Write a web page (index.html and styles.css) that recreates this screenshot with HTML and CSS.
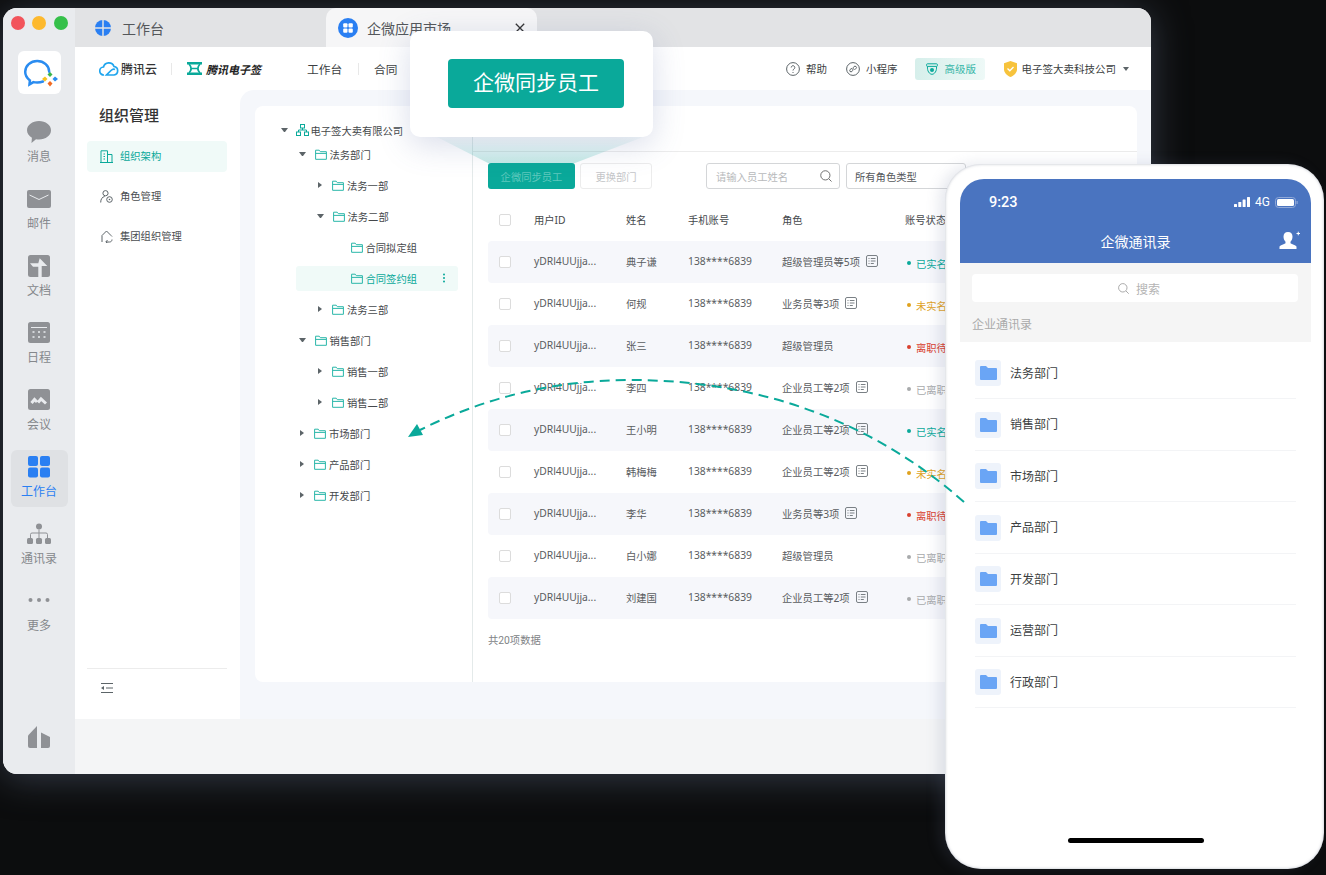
FILE: index.html
```html
<!DOCTYPE html>
<html lang="zh-CN">
<head>
  <meta charset="UTF-8">
  <title>企微同步员工</title>
  <link rel="stylesheet" href="styles.css">
</head>
<body>
  <svg width="0" height="0" class="defs">
    <symbol id="folder" viewBox="0 0 12 11"><path d="M.6 1.2h3.6l1.2 1.5h6v7.6H.6z M.6 4.4h10.8" fill="none" stroke="currentColor" stroke-width="1"/></symbol>
    <symbol id="doc" viewBox="0 0 12 12"><rect x=".5" y=".5" width="11" height="11" rx="1.5" fill="none" stroke="#7a8085"/><path d="M2.5 3.5h1M4.8 3.5h4.7M2.5 6h1M4.8 6h4.7M2.5 8.5h1M4.8 8.5h3" stroke="#7a8085"/></symbol>
    <symbol id="blue-folder" viewBox="0 0 17 14"><path d="M0 1a1 1 0 0 1 1-1h5l2 2h8a1 1 0 0 1 1 1v10a1 1 0 0 1-1 1H1a1 1 0 0 1-1-1z" fill="#6aa5f5"/></symbol>
  </svg>

  <div class="window">
    <!-- Left app rail -->
    <div class="rail">
      <div class="lights"><i class="red"></i><i class="yellow"></i><i class="green"></i></div>
      <div class="tile">
        <svg width="43" height="43" viewBox="0 0 43 43">
          <path d="M25 30.5c-1.800.7-3.800 1-5.800 1-1.300 0-2.600-.1-3.800-.4l-3.900 2.300.4-4C9 27.200 7.200 24.200 7.200 20.800 7.200 14.700 12.600 10 19.200 10s12 4.700 12 10.800" fill="none" stroke="#2a8cf0" stroke-width="2.500" stroke-linecap="round"/>
          <path d="M32 21l2.500 2.500-2.500 2.500-2.500-2.500z" fill="#3ab54a"/>
          <path d="M27 25.500l2.500 2.500-2.500 2.500-3-2.500z" fill="#f7c21e"/>
          <path d="M37 25.500l3 2.500-3 2.500-2.500-2.500z" fill="#2a8cf0"/>
          <path d="M32 30l2.500 2.500-2.500 3-2.500-3z" fill="#f26a21"/>
        </svg>
      </div>
      <div class="rail-nav">
        <div class="rail-item">
          <svg width="24" height="22" viewBox="0 0 24 22"><path d="M12 0c6.600 0 12 4 12 9.200s-5.400 9.300-12 9.300c-1 0-2-.1-3-.3L4.500 22l.4-5.300C2 15 0 12.300 0 9.200 0 4 5.400 0 12 0z" fill="#8f9195"/></svg>
          <span>消息</span>
        </div>
        <div class="rail-item">
          <svg width="24" height="22" viewBox="0 0 24 22"><rect y="2" width="24" height="18" rx="2" fill="#8f9195"/><path d="M2.500 7l9.500 4.500L21.500 7" fill="none" stroke="#e9ebee" stroke-width="1"/></svg>
          <span>邮件</span>
        </div>
        <div class="rail-item">
          <svg width="22" height="22" viewBox="0 0 22 22"><rect width="22" height="22" rx="2.500" fill="#8f9195"/><path d="M2 8.300h8.300l1.400-5L19.300 11h-5.600v11h-3.400V11.700H5z" fill="#e9ebee"/></svg>
          <span>文档</span>
        </div>
        <div class="rail-item">
          <svg width="22" height="22" viewBox="0 0 22 22"><rect width="22" height="21" rx="2.500" fill="#8f9195"/><path d="M3 5.500h16" stroke="#e9ebee"/><path d="M4.500 10h2M10 10h2M15.500 10h2M4.500 15h2M10 15h2M15.500 15h2" stroke="#e9ebee" stroke-width="1.500"/></svg>
          <span>日程</span>
        </div>
        <div class="rail-item">
          <svg width="22" height="22" viewBox="0 0 22 22"><rect width="22" height="21" rx="2.500" fill="#8f9195"/><path d="M3.500 14l3-3.500 2.500 2.500M10 13.500l3-3.500 5 4.500" fill="none" stroke="#e9ebee" stroke-width="3"/></svg>
          <span>会议</span>
        </div>
        <div class="rail-item active">
          <svg width="22" height="22" viewBox="0 0 22 22"><rect width="10" height="10" rx="2" fill="#2a7ff2"/><rect x="12" width="10" height="10" rx="2" fill="#2a7ff2"/><rect y="11.500" width="10" height="10" rx="2" fill="#2a7ff2"/><rect x="12" y="11.500" width="10" height="10" rx="2" fill="#2a7ff2"/></svg>
          <span>工作台</span>
        </div>
        <div class="rail-item">
          <svg width="24" height="22" viewBox="0 0 24 22"><circle cx="12" cy="3.500" r="3" fill="#8f9195"/><path d="M3.500 15v-3.500a1.500 1.500 0 0 1 1.500-1.500h14a1.500 1.500 0 0 1 1.500 1.500V15M12 6.500V15" fill="none" stroke="#8f9195"/><rect y="15" width="6" height="6" rx="1.500" fill="#8f9195"/><rect x="9" y="15" width="6" height="6" rx="1.500" fill="#8f9195"/><rect x="18" y="15" width="6" height="6" rx="1.500" fill="#8f9195"/></svg>
          <span>通讯录</span>
        </div>
        <div class="rail-item">
          <svg width="22" height="22" viewBox="0 0 22 22"><circle cx="2.500" cy="10" r="2" fill="#8f9195"/><circle cx="11" cy="10" r="2" fill="#8f9195"/><circle cx="19.500" cy="10" r="2" fill="#8f9195"/></svg>
          <span>更多</span>
        </div>
      </div>
      <svg class="rail-foot" width="22" height="22" viewBox="0 0 22 22"><path d="M0 9.500L9 0v22H2a2 2 0 0 1-2-2z" fill="#8f9195"/><path d="M13 6.500l9 4.500v9a2 2 0 0 1-2 2h-7z" fill="#8f9195"/></svg>
    </div>

    <div class="main">
      <!-- Tabs -->
      <div class="tabs">
        <div class="tab">
          <svg width="16" height="16" viewBox="0 0 16 16"><circle cx="8" cy="8" r="8" fill="#2a7ff2"/><path d="M8 0v16M0 8h16" stroke="#e2e3e5" stroke-width="1.500"/></svg>
          <span>工作台</span>
        </div>
        <div class="tab current">
          <svg width="20" height="20" viewBox="0 0 20 20"><circle cx="10" cy="10" r="10" fill="#2a7ff2"/><rect x="5.200" y="5.200" width="4.300" height="4.300" rx="1" fill="#fff"/><rect x="10.500" y="5.200" width="4.300" height="4.300" rx="1" fill="#fff"/><rect x="5.200" y="10.500" width="4.300" height="4.300" rx="1" fill="#fff"/><rect x="10.500" y="10.500" width="4.300" height="4.300" rx="1" fill="#fff"/></svg>
          <span>企微应用市场</span>
          <svg class="tab-close" width="10" height="10" viewBox="0 0 10 10"><path d="M.8.800l8.400 8.400M9.200.800L.8 9.200" stroke="#333" stroke-width="1.300"/></svg>
        </div>
      </div>

      <!-- Header -->
      <div class="header">
        <svg width="20" height="14" viewBox="0 0 20 14"><path d="M5 13a4 4 0 0 1-.5-8A5.500 5.500 0 0 1 15 4.500a4.300 4.300 0 0 1 0 8.500H7.500L12 8.500c1.500-1.500 3-1.700 4-1" fill="none" stroke="#1fa5ee" stroke-width="1.700"/></svg>
        <span class="brand">腾讯云</span>
        <i class="head-sep first"></i>
        <svg width="15" height="13" viewBox="0 0 15 13"><path d="M0 1.200h15M0 11.800h15" stroke="#0aa99a" stroke-width="2.400"/><path d="M2 2c2.800 3 2.800 6 0 9M13 2c-2.800 3-2.800 6 0 9M4 6.500h7" fill="none" stroke="#0aa99a" stroke-width="1.700"/></svg>
        <span class="brand-sign">腾讯电子签</span>
        <a class="head-link">工作台</a>
        <i class="head-sep"></i>
        <a class="head-link">合同</a>
        <div class="head-right">
          <svg width="14" height="14" viewBox="0 0 14 14"><circle cx="7" cy="7" r="6.400" fill="none" stroke="#5c6468"/><path d="M5.200 5.500a1.800 1.800 0 1 1 2.800 1.500c-.7.500-1 .8-1 1.500M7 10v1" fill="none" stroke="#5c6468"/></svg>
          <span class="head-text help">帮助</span>
          <svg width="14" height="14" viewBox="0 0 14 14"><circle cx="7" cy="7" r="6.400" fill="none" stroke="#5c6468"/><path d="M4 9.500c1.500 1 3-.5 3-2.500s1.500-3.500 3-2.500-.5 3-1.800 3M6 6.500C4.800 6.500 3 8 4 9.500" fill="none" stroke="#5c6468"/></svg>
          <span class="head-text mini">小程序</span>
          <div class="chip">
            <svg width="12" height="12" viewBox="0 0 12 12"><rect x=".6" y=".8" width="10.800" height="2.600" rx=".8" fill="none" stroke="#0aa99a"/><path d="M1.500 3.500c-.5 4.500 2 7.800 4.500 7.800s5-3.300 4.500-7.800" fill="none" stroke="#0aa99a"/><circle cx="6" cy="7" r="2" fill="#0aa99a"/></svg>
            <span>高级版</span>
          </div>
          <svg width="13" height="16" viewBox="0 0 13 16"><path d="M6.500 0L13 2.200v6c0 3.500-3 6.300-6.500 7.800C3 14.500 0 11.700 0 8.200v-6z" fill="#f7c33c"/><path d="M3.500 7.500l2.300 2.300 3.700-3.800" fill="none" stroke="#fff" stroke-width="1.300"/></svg>
          <span class="head-text company">电子签大卖科技公司</span>
          <i class="caret down"></i>
        </div>
      </div>

      <div class="body">
        <!-- Second level nav -->
        <div class="panel">
          <div class="panel-title">组织管理</div>
          <div class="panel-item selected">
            <svg width="13" height="13" viewBox="0 0 13 13"><path d="M1 12.500V.8h6.500v11.700M7.500 4.500h4.500v8M0 12.500h13M3.500 4h1.500M3.500 6.500h1.500M3.500 9h1.500" fill="none" stroke="#0aa99a"/></svg>
            <span>组织架构</span>
          </div>
          <div class="panel-item">
            <svg width="13" height="13" viewBox="0 0 13 13"><circle cx="5.500" cy="3.200" r="2.600" fill="none" stroke="#5c6468"/><path d="M.7 12.500c0-3.500 1.500-5.500 4-6" fill="none" stroke="#5c6468"/><circle cx="9.500" cy="9.500" r="2.800" fill="none" stroke="#5c6468"/><circle cx="9.500" cy="9.500" r=".8" fill="#5c6468"/></svg>
            <span>角色管理</span>
          </div>
          <div class="panel-item">
            <svg width="13" height="13" viewBox="0 0 13 13"><path d="M2 12V5.500L6.500 1 11 5.500l1 1M12 9.500c0 1.500-1 2.500-2.500 2.500H6M7.500 10l-1.700 2 1.700 1" fill="none" stroke="#5c6468"/></svg>
            <span>集团组织管理</span>
          </div>
          <div class="panel-foot">
            <svg width="12" height="10" viewBox="0 0 12 10"><path d="M0 .5h12M5 5h7M0 9.500h12" stroke="#5c6468"/><path d="M0 5l3-2v4z" fill="#5c6468"/></svg>
          </div>
        </div>

        <div class="content">
          <div class="card">
            <!-- Department tree -->
            <div class="tree">
              <div class="node root"><i class="caret down"></i>
                <svg class="org" width="13" height="12" viewBox="0 0 13 12"><rect x="4.500" y=".5" width="4" height="3.500" fill="none" stroke="#0aa99a"/><rect x=".5" y="8" width="4" height="3.500" fill="none" stroke="#0aa99a"/><rect x="8.500" y="8" width="4" height="3.500" fill="none" stroke="#0aa99a"/><path d="M6.500 4v2M2.500 8V6h8v2" fill="none" stroke="#0aa99a"/></svg>
                <span>电子签大卖有限公司</span></div>
              <div class="node lv1"><i class="caret down"></i><svg class="fold"><use href="#folder"/></svg><span>法务部门</span></div>
              <div class="node lv2"><i class="caret right"></i><svg class="fold"><use href="#folder"/></svg><span>法务一部</span></div>
              <div class="node lv2"><i class="caret down"></i><svg class="fold"><use href="#folder"/></svg><span>法务二部</span></div>
              <div class="node lv3"><i class="caret none"></i><svg class="fold"><use href="#folder"/></svg><span>合同拟定组</span></div>
              <div class="node lv3 picked"><i class="caret none"></i><svg class="fold"><use href="#folder"/></svg><span>合同签约组</span><b class="more-dots"></b></div>
              <div class="node lv2"><i class="caret right"></i><svg class="fold"><use href="#folder"/></svg><span>法务三部</span></div>
              <div class="node lv1"><i class="caret down"></i><svg class="fold"><use href="#folder"/></svg><span>销售部门</span></div>
              <div class="node lv2"><i class="caret right"></i><svg class="fold"><use href="#folder"/></svg><span>销售一部</span></div>
              <div class="node lv2"><i class="caret right"></i><svg class="fold"><use href="#folder"/></svg><span>销售二部</span></div>
              <div class="node lv1"><i class="caret right"></i><svg class="fold"><use href="#folder"/></svg><span>市场部门</span></div>
              <div class="node lv1"><i class="caret right"></i><svg class="fold"><use href="#folder"/></svg><span>产品部门</span></div>
              <div class="node lv1"><i class="caret right"></i><svg class="fold"><use href="#folder"/></svg><span>开发部门</span></div>
            </div>

            <div class="staff">
              <div class="staff-top"></div>
              <div class="toolbar">
                <button class="btn primary">企微同步员工</button>
                <button class="btn ghost">更换部门</button>
                <div class="search-box">
                  <span>请输入员工姓名</span>
                  <svg width="12" height="12" viewBox="0 0 13 13"><circle cx="5.800" cy="5.800" r="5" fill="none" stroke="#666"/><path d="M9.500 9.500l3 3" stroke="#666"/></svg>
                </div>
                <div class="select-box">所有角色类型</div>
              </div>

              <div class="table">
                <div class="row head"><i class="check"></i><span>用户ID</span><span>姓名</span><span>手机账号</span><span>角色</span><span>账号状态</span></div>
                <div class="row"><i class="check"></i><span>yDRl4UUjja...</span><span>典子谦</span><span>138****6839</span><span class="role">超级管理员等5项<svg><use href="#doc"/></svg></span><span class="state ok">已实名</span></div>
                <div class="row"><i class="check"></i><span>yDRl4UUjja...</span><span>何规</span><span>138****6839</span><span class="role">业务员等3项<svg><use href="#doc"/></svg></span><span class="state warn">未实名</span></div>
                <div class="row"><i class="check"></i><span>yDRl4UUjja...</span><span>张三</span><span>138****6839</span><span class="role">超级管理员</span><span class="state bad">离职待交接</span></div>
                <div class="row"><i class="check"></i><span>yDRl4UUjja...</span><span>李四</span><span>138****6839</span><span class="role">企业员工等2项<svg><use href="#doc"/></svg></span><span class="state off">已离职</span></div>
                <div class="row"><i class="check"></i><span>yDRl4UUjja...</span><span>王小明</span><span>138****6839</span><span class="role">企业员工等2项<svg><use href="#doc"/></svg></span><span class="state ok">已实名</span></div>
                <div class="row"><i class="check"></i><span>yDRl4UUjja...</span><span>韩梅梅</span><span>138****6839</span><span class="role">企业员工等2项<svg><use href="#doc"/></svg></span><span class="state warn">未实名</span></div>
                <div class="row"><i class="check"></i><span>yDRl4UUjja...</span><span>李华</span><span>138****6839</span><span class="role">业务员等3项<svg><use href="#doc"/></svg></span><span class="state bad">离职待交接</span></div>
                <div class="row"><i class="check"></i><span>yDRl4UUjja...</span><span>白小娜</span><span>138****6839</span><span class="role">超级管理员</span><span class="state off">已离职</span></div>
                <div class="row"><i class="check"></i><span>yDRl4UUjja...</span><span>刘建国</span><span>138****6839</span><span class="role">企业员工等2项<svg><use href="#doc"/></svg></span><span class="state off">已离职</span></div>
              </div>
              <div class="total">共20项数据</div>
            </div>
          </div>
        </div>
      </div>
      <div class="strip"></div>
    </div>
  </div>

  <!-- Callout over the sync button -->
  <svg class="beam" width="260" height="30" viewBox="0 0 260 30">
    <defs><linearGradient id="beamFill" x1="0" y1="0" x2="0" y2="1"><stop offset="0" stop-color="#0aa99a" stop-opacity=".02"/><stop offset="1" stop-color="#0aa99a" stop-opacity=".24"/></linearGradient></defs>
    <path d="M27 0H233L165 26H78z" fill="url(#beamFill)"/>
  </svg>
  <div class="callout"><div class="callout-btn">企微同步员工</div></div>

  <!-- Phone -->
  <div class="phone">
    <div class="screen">
      <div class="phone-head">
        <div class="status-bar">
          <span class="clock">9:23</span>
          <svg width="16" height="10" viewBox="0 0 16 10"><rect y="7" width="3" height="3" rx=".5" fill="#fff"/><rect x="4.300" y="5" width="3" height="5" rx=".5" fill="#fff"/><rect x="8.600" y="2.500" width="3" height="7.500" rx=".5" fill="#fff"/><rect x="13" width="3" height="10" rx=".5" fill="#fff"/></svg>
          <span class="net">4G</span>
          <svg width="23" height="11" viewBox="0 0 23 11"><rect x=".5" y=".5" width="20" height="10" rx="3" fill="none" stroke="#8fa8d8"/><rect x="2" y="2" width="17" height="7" rx="1.500" fill="#fff"/><rect x="21.500" y="4" width="1.200" height="3" fill="#8fa8d8"/></svg>
        </div>
        <div class="phone-title">企微通讯录
          <svg class="add-user" width="21" height="19" viewBox="0 0 21 19"><path d="M9 1c3 0 4.500 2 4.500 4.800 0 2.200-1 4-2 5v1.500c1.500.8 5 1.800 6 3.200v2.500H.5v-2.500c1-1.400 4.500-2.400 6-3.200v-1.500c-1-1-2-2.800-2-5C4.500 3 6 1 9 1z" fill="#fff"/><path d="M17.500 2.500h3.500M19.250.7v3.600" stroke="#fff"/></svg>
        </div>
      </div>
      <div class="phone-search">
        <div class="phone-input">
          <svg width="11" height="11" viewBox="0 0 11 11"><circle cx="4.800" cy="4.800" r="4.200" fill="none" stroke="#aaa"/><path d="M8 8l2.700 2.700" stroke="#aaa"/></svg>
          <span>搜索</span>
        </div>
        <div class="phone-label">企业通讯录</div>
      </div>
      <div class="dept-list">
        <div class="dept"><div class="dept-icon"><svg><use href="#blue-folder"/></svg></div><span>法务部门</span></div>
        <div class="dept"><div class="dept-icon"><svg><use href="#blue-folder"/></svg></div><span>销售部门</span></div>
        <div class="dept"><div class="dept-icon"><svg><use href="#blue-folder"/></svg></div><span>市场部门</span></div>
        <div class="dept"><div class="dept-icon"><svg><use href="#blue-folder"/></svg></div><span>产品部门</span></div>
        <div class="dept"><div class="dept-icon"><svg><use href="#blue-folder"/></svg></div><span>开发部门</span></div>
        <div class="dept"><div class="dept-icon"><svg><use href="#blue-folder"/></svg></div><span>运营部门</span></div>
        <div class="dept"><div class="dept-icon"><svg><use href="#blue-folder"/></svg></div><span>行政部门</span></div>
      </div>
      <div class="home-bar"></div>
    </div>
  </div>

  <!-- Dashed sync arrow, runs from the phone back to the tree -->
  <svg class="sync-arrow" width="1326" height="875" viewBox="0 0 1326 875">
    <path d="M964 502C860 410 740 380 630 380C550 380 480 400 420 430" fill="none" stroke="#0aa99a" stroke-width="2" stroke-dasharray="10 6"/>
    <path d="M408 437L417 424L423 435z" fill="#0aa99a"/>
  </svg>
</body>
</html>
```
FILE: styles.css
```css
/* Base */
html, body {
  margin: 0;
  padding: 0;
  height: 875px;
  overflow: hidden;
}

body {
  position: relative;
  background-color: #0c0d0e;
  font-family: Roboto, "Noto Sans CJK SC", sans-serif;
  font-size: 10.5px;
  color: #4a4d50;
}

i, b {
  font-style: normal;
  display: block;
}

.defs {
  position: absolute;
}

/* Desktop window */
.window {
  display: flex;
  width: 1148px;
  height: 766px;
  margin: 8px 0 0 3px;
  border-radius: 14px;
  overflow: hidden;
  background-color: #fff;
  box-shadow: 0 4px 36px rgba(80, 90, 110, 0.6);
}

/* App rail */
.rail {
  display: flex;
  flex-direction: column;
  align-items: center;
  width: 72px;
  flex-shrink: 0;
  padding-top: 8px;
  background-color: #e9ebee;
}

.lights {
  display: flex;
  gap: 7.5px;
}

.lights i {
  width: 14px;
  height: 14px;
  border-radius: 50%;
}

.red { background-color: #f2545b; }
.yellow { background-color: #fdb92e; }
.green { background-color: #35c04a; }

.tile {
  width: 43px;
  height: 43px;
  margin-top: 21px;
  border-radius: 6px;
  background-color: #fff;
}

.rail-nav {
  display: flex;
  flex-direction: column;
  gap: 10px;
  margin-top: 21px;
}

.rail-item {
  display: flex;
  flex-direction: column;
  align-items: center;
  gap: 6px;
  width: 57px;
  height: 57px;
  box-sizing: border-box;
  padding-top: 6px;
  border-radius: 6px;
  font-size: 12px;
  line-height: 17px;
  color: #85888c;
}

.rail-item.active {
  background-color: #dfe1e4;
  color: #2a7ff2;
}

.rail-foot {
  margin-top: auto;
  margin-bottom: 26px;
}

/* Main column */
.main {
  display: flex;
  flex-direction: column;
  flex: 1;
  min-width: 0;
}

.tabs {
  display: flex;
  height: 39px;
  flex-shrink: 0;
  background-color: #e2e3e5;
}

.tab {
  display: flex;
  align-items: center;
  gap: 11px;
  width: 251px;
  box-sizing: border-box;
  padding-left: 20px;
  font-size: 14px;
  color: #54575a;
  background-color: #e2e3e5;
}

.tab:first-child {
  border-bottom-right-radius: 8px;
}

.tab.current {
  width: 211px;
  gap: 9px;
  padding-left: 12px;
  border-radius: 10px 10px 0 0;
  background-color: #f6f6f7;
}

.tab-close {
  margin-left: auto;
  margin-right: 12px;
}

/* Header */
.header {
  display: flex;
  align-items: center;
  height: 43px;
  flex-shrink: 0;
  padding: 0 22px 0 24px;
  box-sizing: border-box;
  background-color: #fff;
}

.brand {
  margin-left: 2px;
  font-size: 12px;
  font-weight: 500;
  color: #333;
}

.head-sep {
  width: 1px;
  height: 12px;
  margin: 0 15px 0 16px;
  background-color: #e8e8e8;
}

.head-sep.first {
  margin: 0 15px 0 14px;
}

.brand-sign {
  margin-left: 4px;
  margin-right: 46px;
  font-size: 11px;
  font-weight: 700;
  font-style: italic;
  color: #222;
}

.head-link {
  font-size: 11.7px;
  color: #3c3f42;
}

.head-right {
  display: flex;
  align-items: center;
  margin-left: auto;
}

.head-text {
  margin-left: 6px;
  font-size: 10.5px;
  color: #3c3f42;
}

.help { margin-right: 19px; }
.mini { margin-right: 17px; }
.company { margin-left: 5px; margin-right: 7px; }

.chip {
  display: flex;
  align-items: center;
  gap: 7px;
  width: 70px;
  height: 22px;
  box-sizing: border-box;
  padding-left: 11px;
  margin-right: 19px;
  border-radius: 3px;
  font-size: 10.5px;
  color: #38b6a8;
  background: linear-gradient(90deg, #d6efeb, #eef9f7);
}

/* Tree carets */
.caret {
  width: 0;
  height: 0;
  flex-shrink: 0;
}

.caret.down {
  border-left: 3.5px solid transparent;
  border-right: 3.5px solid transparent;
  border-top: 4.5px solid #5c6468;
}

.caret.right {
  border-top: 3.5px solid transparent;
  border-bottom: 3.5px solid transparent;
  border-left: 4.5px solid #5c6468;
}

/* Body */
.body {
  display: flex;
  flex: 1;
  min-height: 0;
  background-color: #fff;
}

.panel {
  display: flex;
  flex-direction: column;
  width: 165px;
  flex-shrink: 0;
  box-sizing: border-box;
  padding: 0 13px 0 12px;
}

.panel-title {
  padding: 16px 0 14px 12px;
  font-size: 15px;
  line-height: 21px;
  font-weight: 500;
  color: #333;
}

.panel-item {
  display: flex;
  align-items: center;
  gap: 7px;
  height: 31px;
  margin-bottom: 9px;
  padding-left: 13px;
  border-radius: 4px;
  font-size: 10.3px;
  color: #4a4d50;
}

.panel-item span {
  margin-bottom: 2px;
}

.panel-item.selected {
  color: #0aa99a;
  background-color: #f0faf8;
}

.panel-foot {
  display: flex;
  align-items: center;
  height: 38px;
  margin-top: auto;
  margin-bottom: 12px;
  padding-left: 14px;
  border-top: 1px solid #ececec;
}

.content {
  flex: 1;
  min-width: 0;
  padding: 16px 14px 37px 15px;
  border-top-left-radius: 14px;
  background-color: #f5f7fb;
}

.card {
  display: flex;
  height: 100%;
  border-radius: 8px;
  overflow: hidden;
  background-color: #fff;
}

/* Department tree */
.tree {
  width: 218px;
  flex-shrink: 0;
  box-sizing: border-box;
  padding: 8.5px 14px 0 24px;
  border-right: 1px solid #e4eaea;
}

.node {
  display: flex;
  align-items: center;
  height: 31px;
  font-size: 10.3px;
  color: #45484b;
}

.node .caret {
  margin-left: 1.5px;
  margin-right: 9px;
  width: 7px;
  box-sizing: border-box;
}

.node .caret.right {
  width: 4.5px;
  margin-left: 2.5px;
  margin-right: 10px;
}

.node .caret.none {
  border: 0;
}

.root {
  margin-bottom: -7px;
}

.root .caret {
  margin-right: 8px;
}

.org {
  margin-right: 2px;
}

.fold {
  width: 12px;
  height: 11px;
  margin-right: 3px;
  color: #2ab7a9;
}

.lv1 { padding-left: 18px; }
.lv2 { padding-left: 36px; }
.lv3 { padding-left: 54px; }

.picked {
  height: 25px;
  margin: 3px 0 3px 17px;
  padding-left: 37px;
  padding-right: 13px;
  border-radius: 3px;
  color: #0aa99a;
  background-color: #f0faf8;
}

.more-dots {
  width: 2px;
  height: 2px;
  margin-left: auto;
  border-radius: 50%;
  background-color: #0aa99a;
  box-shadow: 0 -3.5px 0 #0aa99a, 0 3.5px 0 #0aa99a;
}

/* Staff table */
.staff {
  flex: 1;
  min-width: 0;
  overflow: hidden;
}

.staff-top {
  height: 45px;
  border-bottom: 1px solid #ececec;
}

.toolbar {
  display: flex;
  align-items: center;
  height: 26px;
  margin-top: 11px;
  padding-left: 15px;
}

.btn {
  height: 26px;
  padding: 0;
  border-radius: 3px;
  font: inherit;
  font-size: 10.3px;
}

.btn.primary {
  width: 87px;
  border: 0;
  color: #5fc8bd;
  background-color: #0aa99a;
}

.btn.ghost {
  width: 72px;
  margin-left: 5px;
  border: 1px solid #ececec;
  color: #c4c6c8;
  background-color: #fff;
}

.search-box, .select-box {
  display: flex;
  align-items: center;
  height: 26px;
  box-sizing: border-box;
  border: 1px solid #d4d6d8;
  border-radius: 3px;
  font-size: 10.3px;
}

.search-box {
  justify-content: space-between;
  width: 134px;
  margin-left: 54px;
  padding: 0 7px 0 9px;
  color: #b8babc;
}

.select-box {
  flex-shrink: 0;
  width: 120px;
  margin-left: 6px;
  padding-left: 8px;
  color: #55585b;
}

.table {
  margin-top: 10px;
  margin-left: 15px;
  width: 649px;
}

.row {
  display: grid;
  grid-template-columns: 46px 92px 62px 94px 123px 1fr;
  align-items: center;
  height: 42px;
  border-radius: 4px;
  white-space: nowrap;
  font-family: "Noto Sans", "Noto Sans CJK SC", sans-serif;
  font-size: 10.3px;
  color: #595c5f;
}

.row > span {
  margin-bottom: 2px;
}

.row.head {
  color: #45484b;
}

.row:nth-child(even) {
  background-color: #f6f7fb;
}

.check {
  width: 12px;
  height: 12px;
  margin-left: 11px;
  border: 1px solid #dcdcdc;
  border-radius: 2px;
  box-sizing: border-box;
  background-color: #fff;
}

.role {
  display: flex;
  align-items: center;
  gap: 6px;
}

.role svg {
  width: 12px;
  height: 12px;
}

.row > .state {
  display: flex;
  align-items: center;
  gap: 5px;
  margin: 2px 0 0 2px;
}

.state::before {
  content: "";
  width: 4px;
  height: 4px;
  border-radius: 50%;
  background-color: currentColor;
}

.ok { color: #0aa99a; }
.warn { color: #e0a21e; }
.bad { color: #d9402f; }
.off { color: #a8aaac; }

.total {
  margin: 15px 0 0 15px;
  font-size: 10.3px;
  line-height: 14px;
  color: #808386;
}

.strip {
  height: 55px;
  flex-shrink: 0;
  background-color: #f4f5f6;
}

/* Callout */
.beam {
  position: absolute;
  left: 410px;
  top: 137px;
}

.callout {
  position: absolute;
  left: 410px;
  top: 31px;
  width: 243px;
  height: 106px;
  box-sizing: border-box;
  padding: 28px 0 0 38px;
  border-radius: 10px;
  background-color: #fff;
  box-shadow: 0 8px 32px rgba(80, 100, 160, 0.22);
}

.callout-btn {
  width: 176px;
  height: 49px;
  border-radius: 4px;
  font-size: 21px;
  line-height: 49px;
  text-align: center;
  color: #fff;
  background-color: #0aa99a;
}

/* Phone */
.phone {
  position: absolute;
  left: 945px;
  top: 164px;
  width: 379px;
  height: 705px;
  box-sizing: border-box;
  padding: 15px 13px 15px 15px;
  border-radius: 36px;
  background-color: #fff;
  box-shadow: inset 0 0 3px rgba(110, 120, 140, 0.5), -6px 0 14px rgba(100, 110, 150, 0.16);
}

.screen {
  display: flex;
  flex-direction: column;
  height: 100%;
}

.phone-head {
  height: 84px;
  flex-shrink: 0;
  border-radius: 24px 24px 0 0;
  color: #fff;
  background-color: #4a74c0;
}

.status-bar {
  display: flex;
  align-items: center;
  height: 18px;
  padding: 14px 13px 0 29px;
}

.clock {
  margin-right: auto;
  font-size: 14.5px;
  font-weight: 500;
}

.net {
  margin: 0 5px;
  font-size: 12px;
}

.phone-title {
  position: relative;
  margin-top: 21px;
  font-size: 14px;
  line-height: 20px;
  text-align: center;
}

.add-user {
  position: absolute;
  right: 11px;
  top: -1px;
}

.phone-search {
  height: 79px;
  flex-shrink: 0;
  box-sizing: border-box;
  padding: 11px 13px 0 12px;
  background-color: #f5f5f5;
}

.phone-input {
  display: flex;
  align-items: center;
  justify-content: center;
  gap: 7px;
  height: 28px;
  padding-left: 8px;
  border-radius: 4px;
  font-size: 12px;
  color: #b4b4b4;
  background-color: #fff;
}

.phone-label {
  margin-top: 15px;
  font-size: 12px;
  line-height: 17px;
  color: #aaa;
}

.dept-list {
  flex: 1;
  padding: 5.5px 15px 0;
}

.dept {
  display: flex;
  align-items: center;
  gap: 9px;
  padding: 12.5px 0 12px;
  border-bottom: 1px solid #f3f4f6;
  font-size: 12px;
  color: #3c3f42;
}

.dept span {
  margin-bottom: 2px;
}

.dept-icon {
  display: flex;
  align-items: center;
  justify-content: center;
  width: 26px;
  height: 26px;
  border-radius: 3px;
  background-color: #eef3fb;
}

.dept-icon svg {
  width: 17px;
  height: 14px;
}

.home-bar {
  width: 136px;
  height: 5px;
  flex-shrink: 0;
  margin: 0 auto 11px;
  border-radius: 3px;
  background-color: #000;
}

.sync-arrow {
  position: absolute;
  left: 0;
  top: 0;
  pointer-events: none;
}
```
